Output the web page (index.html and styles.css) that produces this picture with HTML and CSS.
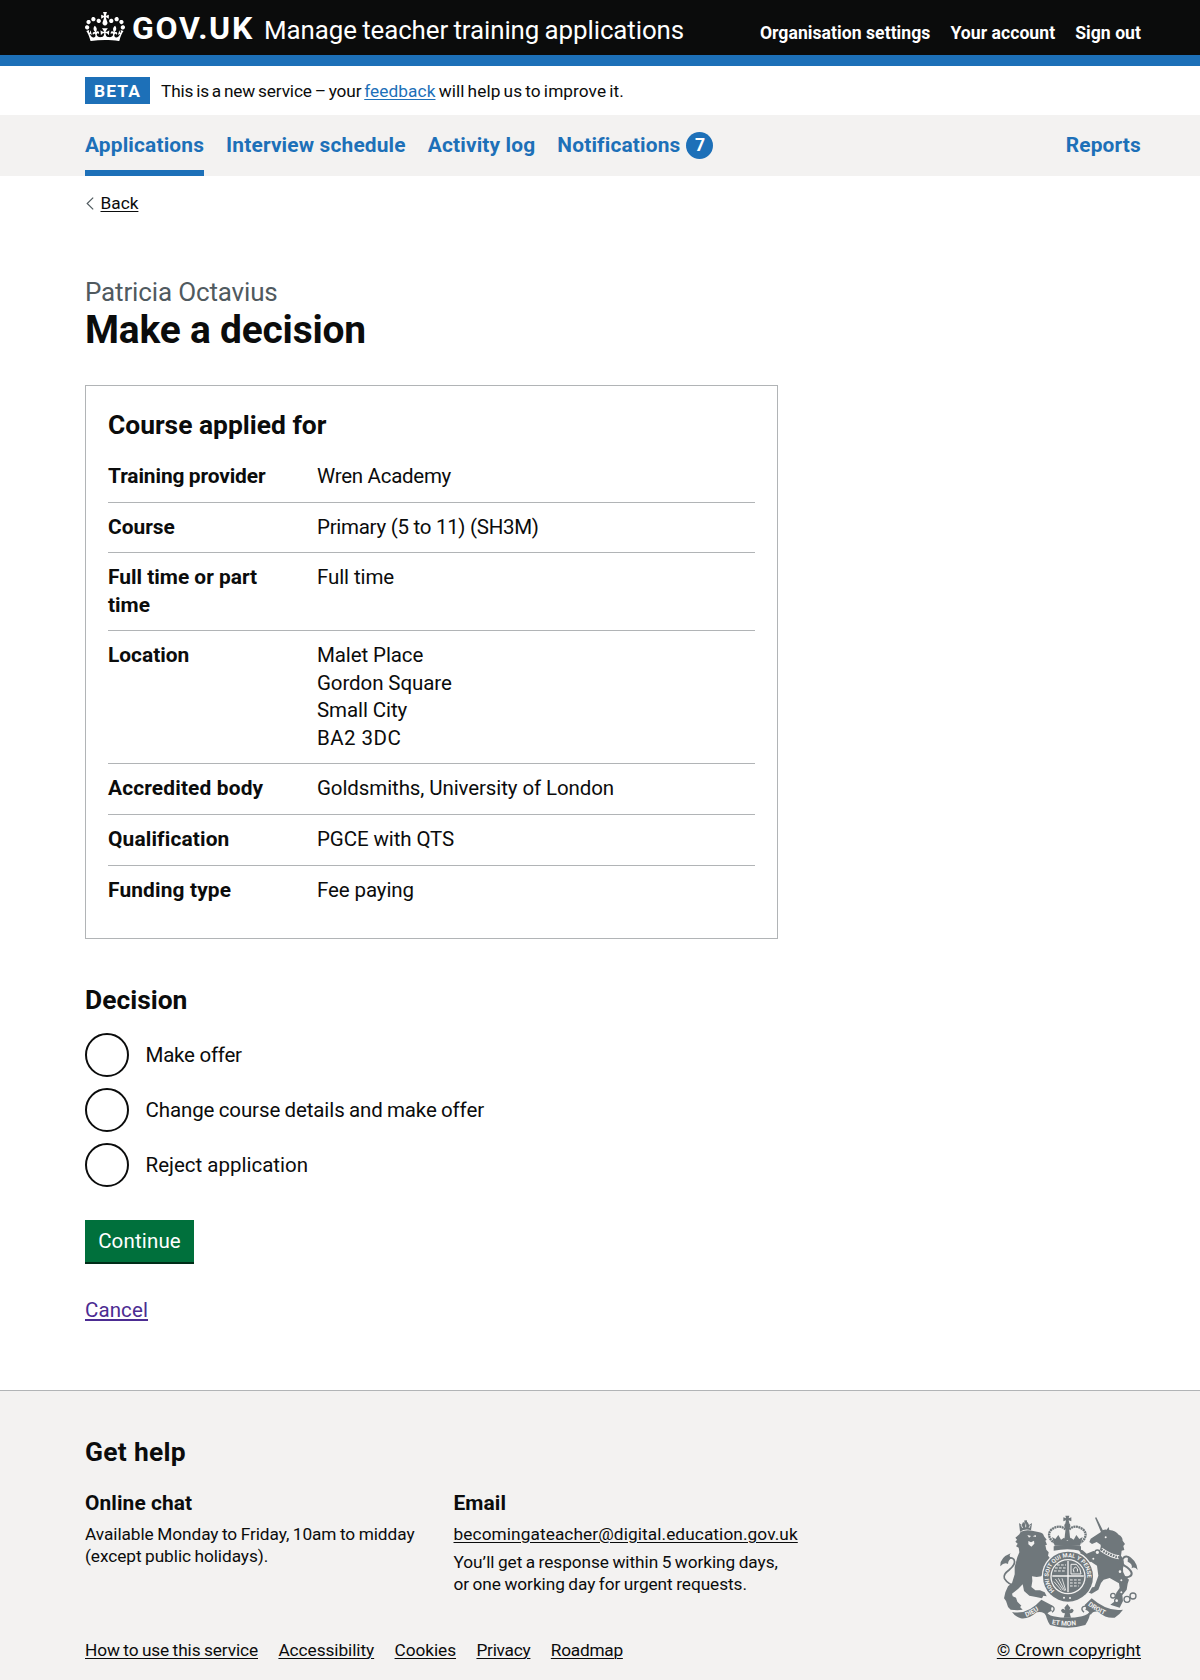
FILE: index.html
```html
<!DOCTYPE html>
<html lang="en">
<head>
<meta charset="utf-8">
<title>Make a decision - Manage teacher training applications - GOV.UK</title>
<link rel="stylesheet" href="styles.css">
</head>
<body>
<header class="header">
  <div class="container header-row">
    <a class="logo" href="#">
      <svg class="logo-crown" viewBox="0 0 132 97" aria-hidden="true"><path fill="currentColor" fill-rule="evenodd" d="M25 30.2c3.5 1.5 7.7-.2 9.1-3.7 1.5-3.6-.2-7.8-3.9-9.2-3.6-1.4-7.6.3-9.1 3.9-1.4 3.5.3 7.5 3.9 9zM9 39.5c3.6 1.5 7.8-.2 9.2-3.7 1.5-3.6-.2-7.8-3.9-9.1-3.6-1.5-7.6.2-9.1 3.8-1.4 3.5.3 7.5 3.8 9zM4.4 57.2c3.5 1.5 7.7-.2 9.1-3.8 1.5-3.6-.2-7.7-3.9-9.1-3.5-1.5-7.6.3-9.1 3.8-1.4 3.5.3 7.6 3.9 9.1zm38.3-21.4c3.5 1.5 7.7-.2 9.1-3.8 1.5-3.6-.2-7.7-3.9-9.1-3.6-1.5-7.6.3-9.1 3.8-1.3 3.6.4 7.7 3.9 9.1zm64.4-5.6c-3.6 1.5-7.8-.2-9.1-3.7-1.5-3.6.2-7.8 3.8-9.2 3.6-1.4 7.7.3 9.2 3.9 1.3 3.5-.4 7.5-3.9 9zm15.9 9.3c-3.6 1.5-7.7-.2-9.1-3.7-1.5-3.6.2-7.8 3.7-9.1 3.6-1.5 7.7.2 9.2 3.8 1.5 3.5-.3 7.5-3.8 9zm4.7 17.7c-3.6 1.5-7.8-.2-9.2-3.8-1.5-3.6.2-7.7 3.9-9.1 3.6-1.5 7.7.3 9.2 3.8 1.3 3.5-.4 7.6-3.9 9.1zM89.3 35.8c-3.6 1.5-7.8-.2-9.2-3.8-1.4-3.6.2-7.7 3.9-9.1 3.6-1.5 7.7.3 9.2 3.8 1.4 3.6-.3 7.7-3.9 9.1zM69.7 17.7l8.9 4.7V9.3l-8.9 2.8c-.2-.3-.5-.6-.9-.9L72.4 0H59.6l3.5 11.2c-.3.3-.6.5-.9.9l-8.8-2.8v13.1l8.8-4.7c.3.3.6.7.9.9l-5 15.4v.1c-.2.8-.4 1.6-.4 2.4 0 4.1 3.1 7.5 7 8.1h.2c.3 0 .7.1 1 .1.4 0 .7 0 1-.1h.2c4-.6 7.1-4.1 7.1-8.1 0-.8-.1-1.7-.4-2.4V34l-5.1-15.4c.4-.2.7-.6 1-.9zM66 92.8c16.9 0 32.8 1.1 47.1 3.2 4-16.9 8.9-26.7 14-33.5l-9.6-3.4c1 4.9 1.1 7.2 0 10.2-1.5-1.4-3-4.3-4.2-8.7L108.6 76c2.8-2 5-3.2 7.5-3.3-4.4 9.4-10 11.9-13.6 11.2-4.3-.8-6.3-4.6-5.6-7.9 1-4.7 5.7-5.9 8-.5 4.3-8.7-3-11.4-7.6-8.8 7.1-7.2 7.9-13.5 2.1-21.1-8 6.1-8.1 12.3-4.5 20.8-4.7-5.4-12.1-2.5-9.5 6.2 3.4-5.2 7.9-2 7.2 3.1-.6 4.3-6.4 7.8-13.5 7.2-10.3-.9-10.9-8-11.2-13.8 2.5-.5 7.1 1.8 11 7.3L80.2 60c-4.1 4.4-8 5.3-12.3 5.4 1.4-4.4 8-11.6 8-11.6H55.5s6.4 7.2 7.9 11.6c-4.2-.1-8-1-12.3-5.4l1.4 16.4c3.9-5.5 8.5-7.7 10.9-7.3-.3 5.8-.9 12.8-11.1 13.8-7.2.6-12.9-2.9-13.5-7.2-.7-5 3.8-8.3 7.1-3.1 2.7-8.7-4.6-11.6-9.4-6.2 3.7-8.5 3.6-14.7-4.6-20.8-5.8 7.6-5 13.9 2.2 21.1-4.7-2.6-11.9.1-7.7 8.8 2.3-5.5 7.1-4.2 8.1.5.7 3.3-1.3 7.1-5.7 7.9-3.5.7-9-1.8-13.5-11.2 2.5.1 4.7 1.3 7.5 3.3l-4.7-15.4c-1.2 4.4-2.7 7.2-4.3 8.7-1.1-3-.9-5.3 0-10.2l-9.5 3.4c5 6.9 9.9 16.7 14 33.5 14.8-2.1 30.8-3.2 47.7-3.2z"/></svg>
      <span class="logo-text">GOV.UK</span>
    </a>
    <a class="service-name" href="#">Manage teacher training applications</a>
    <nav class="account-nav">
      <a href="#">Organisation settings</a>
      <a href="#">Your account</a>
      <a href="#">Sign out</a>
    </nav>
  </div>
</header>

<div class="container phase">
  <strong class="tag">BETA</strong>
  <span class="phase-text">This is a new service – your <span class="phase-end"><a class="link-blue" href="#">feedback</a> will help us to improve it.</span></span>
</div>

<nav class="primary-nav">
  <div class="container nav-row">
    <a class="nav-item nav-item-current" href="#">Applications</a>
    <a class="nav-item" href="#">Interview schedule</a>
    <a class="nav-item" href="#">Activity log</a>
    <a class="nav-item nav-item-count" href="#"><span>Notifications</span><span class="count">7</span></a>
    <a class="nav-item nav-item-end" href="#">Reports</a>
  </div>
</nav>

<main class="container main">
  <div class="back">
    <svg class="back-arrow" viewBox="0 0 8 13" aria-hidden="true"><path d="M7.2.6 1.2 6.5l6 5.9" fill="none" stroke="#505a5f" stroke-width="1.2"/></svg>
    <a class="back-link" href="#">Back</a>
  </div>

  <h1 class="title"><span class="caption">Patricia Octavius</span>Make a decision</h1>

  <section class="card">
    <h2 class="heading">Course applied for</h2>
    <dl class="summary">
      <div class="row"><dt class="close">Training provider</dt><dd class="tight">Wren Academy</dd></div>
      <div class="row"><dt>Course</dt><dd class="tight">Primary (5 to 11) (SH3M)</dd></div>
      <div class="row"><dt>Full time or part time</dt><dd>Full time</dd></div>
      <div class="row"><dt>Location</dt><dd>Malet Place<br>Gordon Square<br>Small City<br><span class="looser">BA2 3DC</span></dd></div>
      <div class="row"><dt class="loose">Accredited body</dt><dd>Goldsmiths, University of London</dd></div>
      <div class="row"><dt class="loose">Qualification</dt><dd>PGCE with QTS</dd></div>
      <div class="row"><dt class="loose">Funding type</dt><dd>Fee paying</dd></div>
    </dl>
  </section>

  <form class="decision">
    <h2 class="heading">Decision</h2>
    <div class="radios">
      <label class="radio"><input type="radio" name="decision"><span class="tight">Make offer</span></label>
      <label class="radio"><input type="radio" name="decision"><span class="close">Change course details and make offer</span></label>
      <label class="radio"><input type="radio" name="decision"><span>Reject application</span></label>
    </div>
    <button class="button" type="button">Continue</button>
    <p class="cancel"><a href="#">Cancel</a></p>
  </form>
</main>

<footer class="footer">
  <div class="container footer-row">
    <div class="footer-main">
      <h2 class="heading heading-help">Get help</h2>
      <div class="help">
        <div>
          <h3 class="help-title">Online chat</h3>
          <p class="help-text">Available Monday to Friday, 10am to midday<br><span>(except public holidays).</span></p>
        </div>
        <div>
          <h3 class="help-title">Email</h3>
          <p class="help-text email"><a href="#">becomingateacher@digital.education.gov.uk</a></p>
          <p class="help-text">You’ll get a response within 5 working days,<br>or one working day for urgent requests.</p>
        </div>
      </div>
      <nav class="footer-links">
        <a class="close" href="#">How to use this service</a>
        <a href="#">Accessibility</a>
        <a href="#">Cookies</a>
        <a class="tight" href="#">Privacy</a>
        <a class="tight" href="#">Roadmap</a>
      </nav>
    </div>
    <a class="copyright" href="#">
      <svg class="arms" viewBox="60 46 416 340" fill="#6f777b" aria-hidden="true">
        <defs>
          <path id="garter" d="M224 273A58 58 0 1 1 304 273"/>
          <path id="motto-left" d="M139 352Q168 341 198 316"/>
          <path id="motto-mid" d="M215 373Q262 383 312 373"/>
          <path id="motto-right" d="M323 317Q352 339 392 354"/>
        </defs>
        <!-- crown -->
        <path d="M256 48h12l-2 8 8-3v12l-8-3 2 9h-12l2-9-8 3V53l8 3z"/>
        <circle cx="262" cy="78" r="9"/>
        <path d="M257 84h10l4 38h-18z"/>
        <g fill="none" stroke="#6f777b" stroke-width="7" stroke-dasharray="6 1.5">
          <path d="M256 90c-8-12-28-12-42 0-14 14-4 30 8 39"/>
          <path d="M268 90c8-12 28-12 42 0 14 14 4 30-8 39"/>
        </g>
        <path d="M216 112l10 6 9-12 8 14 9-6 10 10 10-10 9 6 8-14 9 12 10-6-8 26h-76z"/>
        <path d="M221 140q41-9 82 0v13q-41-9-82 0z"/>
        <!-- lion -->
        <path d="M117 70l8 6 4-9 7 5 7-5 4 9 9-6-3 22q-17-6-33 4z"/>
        <path d="M133 62h8v10h-8z"/>
        <path d="M123 76l5 9M137 74v9M151 76l-4 9" stroke="#f3f2f1" stroke-width="2.5"/>
        <path d="M118 104l4-8q18-8 38-2l18 4q12 2 14 12l8 10-4 3 5 12-5 1 3 14 7 8-2 10 10 12-6 16-16 22-8 12-14 2-14-2 1 14-3 18 12 10 14 0 14 6 6 12-10-2-4 8-18-4-20-4-16-14-4-20-14 14-18 14 2 8 10 4 4 12 12 12-4 4 8 8-16 2-20-2-8-8-6-18-6-8 4-18 8-18 12-10 8-26 0-22 8-30 6-14-2-14-8-4 5-8-7-6 5-6-5-6z"/>
        <path d="M142 106l11 3-6 5zM158 110l9-4 1 6zM145 124l8 4 9-5 1 9-9 9-9-7z" fill="#f3f2f1"/>
        <path d="M113 262q-30-8-40-26-4-12 14-25 22-18 15-31-10-12-28 4" fill="none" stroke="#6f777b" stroke-width="5"/>
        <path d="M61 200q-2-26 31-39-8 10 4 14-12 6-12 18-12-6-23 7z"/>
        <!-- unicorn -->
        <path d="M345 54l4-1 22 44-7 3z"/>
        <path d="M364 96q6-8 16-6l6-8 2 9q20 2 28 14 12 6 12 18l7 10-5 6 3 12-8 2-2 15q14 14 6 38-2 12 6 22l12 12-4 12-3 18-13 16 2 18-10 20-28-9 16-12-2-8 4-16 10-14-2-14-28-16-18 5-8 10-8 20-20 12-16-6 8-12 16-2 12-34-4-30-18-12-16 8 2 18-10-4-10-16 8 0 3-12-18-12 10-8-8-12 14 4 12 10 20-8 14 3q10-11 8-22l-12-8-14 6-8-6 4-10z"/>
        <path d="M363 149q28 20 54 24" fill="none" stroke="#f3f2f1" stroke-width="12"/>
        <path d="M363 149q28 20 54 24" fill="none" stroke="#6f777b" stroke-width="7" stroke-dasharray="5 3"/>
        <circle cx="377" cy="113" r="3" fill="#f3f2f1"/>
        <path d="M423 232q34 4 32-12-4-12-22-22-14-12-2-24 10-8 22 4" fill="none" stroke="#6f777b" stroke-width="6"/>
        <path d="M444 171q26 8 29 40-10-11-18-5 4-14-12-20z"/>
        <g fill="#f3f2f1" stroke="#6f777b" stroke-width="4">
          <circle cx="352" cy="158" r="7"/><circle cx="340" cy="177" r="5"/><circle cx="420" cy="216" r="6"/><circle cx="424" cy="242" r="5"/>
          <circle cx="399" cy="288" r="7"/><circle cx="410" cy="303" r="6"/><circle cx="424" cy="278" r="5"/><circle cx="441" cy="299" r="9"/><circle cx="459" cy="289" r="9"/>
        </g>
        <!-- garter and shield -->
        <circle cx="264" cy="231" r="79" fill="#f3f2f1"/>
        <circle cx="264" cy="231" r="75"/>
        <circle cx="264" cy="231" r="53" fill="#f3f2f1"/>
        <circle cx="264" cy="231" r="49"/>
        <g stroke="#f3f2f1" fill="none">
          <path d="M264 184v94M217 229h94" stroke-width="4"/>
          <path d="M225 205h33M222 214h36M231 196h27M270 241h36M270 250h34M270 259h26" stroke-width="3" stroke-dasharray="8 4"/>
          <path d="M273 194h16q14 12 14 29h-30z" stroke-width="3"/>
          <path d="M282 218q-6-10 4-16 10 4 6 14" stroke-width="3"/>
          <path d="M226 238l24 34M235 236l20 38M246 236l11 36M222 246l22 26" stroke-width="2.5"/>
        </g>
        <text class="motto-garter"><textPath href="#garter">HONI SOIT QUI MAL Y PENSE</textPath></text>
        <g fill="#f3f2f1"><circle cx="252" cy="294" r="3"/><circle cx="270" cy="295" r="3"/></g>
        <!-- plant badge and ribbon -->
        <path d="M262 313l9 11-3 8q8-10 13 0-2 10-12 9l4 13h-22l4-13q-10 1-12-9 5-10 13 0l-3-8z"/>
        <path d="M96 337q46 10 88-37l34 18q-8 10-2 16-12 2-18 14-6-14-28-10-26 22-48 18-18-6-26-19z"/>
        <path d="M429 330q-46 8-94-34l-21 20q6 8 2 14 12 4 16 16 6-12 22-10 26 22 50 18 14-8 25-24z"/>
        <path d="M194 330q8 16 26 20 44 9 86 0 20-4 26-18-2 24-16 44-54 16-106 0-12-18-16-46z"/>
        <path d="M196 330q12-16 24-8 6 8-4 16M330 330q-10-16-22-8-6 8 4 16" fill="none" stroke="#6f777b" stroke-width="4"/>
        <g class="motto">
          <text><textPath href="#motto-left">DIEU</textPath></text>
          <text><textPath href="#motto-mid">ET MON</textPath></text>
          <text><textPath href="#motto-right">DROIT</textPath></text>
        </g>
      </svg>
      <span class="copyright-text">© Crown copyright</span>
    </a>
  </div>
</footer>
</body>
</html>
```
FILE: styles.css
```css
* { box-sizing: border-box; }

body {
  margin: 0;
  min-height: 1680px;
  display: flex;
  flex-direction: column;
  background: #fff;
  color: #0b0c0c;
  font-family: Roboto, "Liberation Sans", sans-serif;
  font-size: 20.5px;
  line-height: 27.5px;
}

h1, h2, h3, p, dl, dd { margin: 0; }
a { color: inherit; text-decoration-thickness: 1px; text-underline-offset: 2px; }

.container { width: 1056px; margin-left: 85px; }

/* Spacing adjustments */
.tight { letter-spacing: -0.25px; }
.loose { letter-spacing: 0.15px; }
.looser { letter-spacing: 0.5px; }
.close { letter-spacing: -0.1px; word-spacing: -0.7px; }

/* Header */
.header { background: #0b0c0c; color: #fff; border-bottom: 11px solid #1d70b8; }
.header a { text-decoration: none; }
.header-row { display: flex; align-items: baseline; height: 55px; padding-top: 12px; }
.logo { display: flex; align-items: baseline; width: 179px; }
.logo-crown { width: 40px; height: 29.4px; margin-right: 7px; align-self: flex-start; }
.logo-text { font-size: 32px; font-weight: 700; line-height: 32px; letter-spacing: 1.7px; }
.service-name { font-size: 25.9px; letter-spacing: -0.09px; word-spacing: -1px; }
.account-nav { display: flex; gap: 20px; margin-left: auto; font-size: 17.6px; font-weight: 700; letter-spacing: 0.04px; }

/* Phase banner */
.phase { display: flex; align-items: center; height: 49px; font-size: 17.25px; line-height: 22px; }
.tag {
  width: 65px; height: 27px; margin-right: 11px; padding-top: 1px;
  background: #1d70b8; color: #fff;
  font-size: 17.4px; line-height: 26px; letter-spacing: 1.1px; text-align: center;
}
.phase-text { letter-spacing: -0.16px; word-spacing: -1.2px; }
.phase-end { letter-spacing: 0.07px; }
.link-blue { color: #1d70b8; }

/* Primary navigation */
.primary-nav { background: #f3f2f1; color: #1d70b8; }
.nav-row { display: flex; gap: 22px; height: 61px; font-size: 20.9px; font-weight: 700; }
.nav-item { padding-top: 17px; text-decoration: none; letter-spacing: 0.16px; }
.nav-item-current { border-bottom: 6px solid #1d70b8; }
.nav-item-count { display: flex; gap: 6px; }
.nav-item-end { margin-left: auto; }
.count {
  width: 27px; height: 27px; border-radius: 50%;
  background: #1d70b8; color: #fff;
  font-size: 17.6px; line-height: 27px; text-align: center; letter-spacing: 0;
}

/* Page title */
.back { display: flex; align-items: center; gap: 7px; margin-top: 16px; font-size: 17.25px; line-height: 22px; }
.back-arrow { width: 8px; height: 13px; margin: 1px 0 0 0.5px; }
.title { margin-top: 62px; font-size: 38.9px; line-height: 44px; letter-spacing: -0.2px; }
.caption { display: block; color: #505a5f; font-size: 26px; font-weight: 400; line-height: 32px; letter-spacing: -0.15px; }
.heading { padding-top: 1px; font-size: 26.4px; line-height: 33px; }
.heading-help { letter-spacing: 0.3px; }

/* Course summary */
.card { width: 693px; margin-top: 33px; padding: 22px; border: 1px solid #b1b4b6; }
.summary { margin-top: 11px; padding-bottom: 0.5px; }
.row { display: flex; padding: 11px 0 11.1px; border-bottom: 1px solid #b1b4b6; }
.row:first-child { padding-top: 10px; }
.row:last-child { border-bottom: 0; }
.row dt { width: 209px; padding-right: 22px; font-size: 20.9px; font-weight: 700; }
.row dd { flex: 1; letter-spacing: -0.1px; }
.row .tight { letter-spacing: -0.28px; }
.row .looser { letter-spacing: 0.45px; }

/* Decision form */
.decision { margin-top: 44.5px; }
.radios { display: flex; flex-direction: column; gap: 11px; margin-top: 15.5px; }
.radio { display: flex; align-items: center; gap: 16.5px; height: 44px; }
.radio span { padding-top: 2px; }
.radio input { appearance: none; width: 44px; height: 44px; margin: 0; border: 2.2px solid #0b0c0c; border-radius: 50%; background: #fff; }
.button {
  display: block; width: 109px; height: 42px; margin: 33px 0 35px; padding: 2px 0 0;
  border: 0; background: #00703c; color: #fff; box-shadow: 0 2px 0 #002d18;
  font: inherit; letter-spacing: 0.15px;
}
.cancel { color: #4c2c92; letter-spacing: 0.1px; }
.cancel a { text-decoration-thickness: 2px; text-underline-offset: 2px; }

/* Footer */
.footer { flex: 1; margin-top: 65.5px; padding: 44px 0 19px; border-top: 1px solid #b1b4b6; background: #f3f2f1; }
.footer-row { display: flex; justify-content: space-between; align-items: flex-end; font-size: 17.25px; line-height: 22px; }
.help { display: grid; grid-template-columns: 368.5px auto; margin-top: 21px; }
.help-title { margin-bottom: 5.5px; font-size: 20.9px; line-height: 27.5px; letter-spacing: 0.1px; }
.help-text { letter-spacing: -0.06px; word-spacing: -0.7px; }
.email { margin-bottom: 6.5px; letter-spacing: 0.09px; }
.footer-links { display: flex; gap: 20.4px; margin-top: 43.5px; letter-spacing: -0.06px; }
.copyright { display: flex; flex-direction: column; align-items: flex-end; gap: 10.5px; text-decoration: none; }
.copyright-text { text-decoration: underline 1px; text-underline-offset: 2px; letter-spacing: 0.08px; }
.arms { width: 138.7px; height: 113.3px; margin-right: 2.5px; }
.motto text { fill: #f3f2f1; font: 700 20px Roboto, sans-serif; }
.motto-garter { fill: #f3f2f1; font: 700 17.5px Roboto, sans-serif; }
```
